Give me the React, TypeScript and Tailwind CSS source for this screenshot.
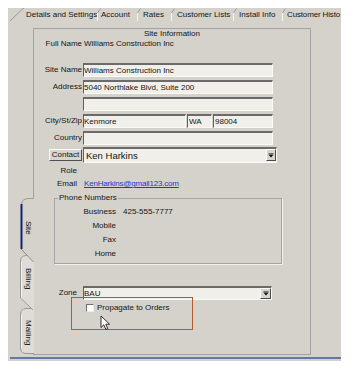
import React from "react";

const sunken =
  "bg-[#f0efe9] border-t-2 border-l border-r border-b border-t-[#6a6a6a] border-l-[#5f5f5f] border-r-[#fbfbf8] border-b-[#fbfbf8]";

function Arrow() {
  return (
    <svg width="6" height="5" viewBox="0 0 6 5">
      <rect x="0.5" y="0.5" width="5" height="1" fill="#111" />
      <path d="M0.8 2 H5.2 L3 4.6 Z" fill="#111" />
    </svg>
  );
}

function DropBtn({ size }: { size: string }) {
  return (
    <div
      className={`${size} shrink-0 bg-[#d8d5ce] border border-t-[#fbfbfb] border-l-[#fbfbfb] border-r-[#4a4a4a] border-b-[#4a4a4a] flex items-center justify-center`}
    >
      <Arrow />
    </div>
  );
}

function TabSep() {
  return (
    <div className="w-[4px] h-[13px] shrink-0">
      <svg width="4" height="13" viewBox="0 0 4 13">
        <path d="M0.5 13 V4.5" stroke="#f6f6f3" strokeWidth="1" fill="none" />
        <path d="M0.5 5 L3.5 0.5" stroke="#9c9c9c" strokeWidth="1" fill="none" />
      </svg>
    </div>
  );
}

function TabStrip() {
  return (
    <div className="h-[13px] flex shrink-0 whitespace-nowrap leading-[13px] text-[#141414]">
      <div className="w-[16px] h-[13px] shrink-0">
        <svg width="16" height="13" viewBox="0 0 16 13">
          <path d="M2 13 L15 0.5 H16" stroke="#9a9a9a" strokeWidth="1" fill="none" />
        </svg>
      </div>
      <div className="w-[73px] shrink-0 pl-[2px]">Details and Settings</div>
      <TabSep />
      <div className="w-[36px] shrink-0">Account</div>
      <TabSep />
      <div className="w-[30px] shrink-0 pl-[2px]">Rates</div>
      <TabSep />
      <div className="w-[58px] shrink-0 pl-[2px]">Customer Lists</div>
      <TabSep />
      <div className="w-[45px] shrink-0 pl-[2px]">Install Info</div>
      <TabSep />
      <div className="shrink-0 pl-[1px] tracking-[-0.15px]">Customer Histo</div>
    </div>
  );
}

function VerticalTabs() {
  return (
    <div className="w-[13px] shrink-0 flex flex-col pt-[170px] text-[#141414]">
      {/* Site (active) */}
      <div className="relative z-20 w-[14px] h-[64px] shrink-0 flex justify-center pl-[2px] pt-[23px]">
        <svg className="absolute inset-0" width="14" height="64" viewBox="0 0 14 64">
          <path d="M14 0 H8 Q1 0.5 1 7 V51 L13.5 64 H14 Z" fill="#d5d2cb" />
          <path d="M14 0.5 H8 Q1.5 1 1.5 7" stroke="#9d9d9d" strokeWidth="1" fill="none" />
          <path d="M1.5 6 V51" stroke="#13236e" strokeWidth="2" fill="none" />
          <path d="M1 51 L13.5 64" stroke="#8c8c8c" strokeWidth="1" fill="none" />
        </svg>
        <span className="relative [writing-mode:vertical-rl] leading-[9px]">Site</span>
      </div>
      {/* Billing */}
      <div className="relative z-10 -mt-[7px] w-[14px] h-[55px] shrink-0 flex justify-center pl-[2px] pt-[13px]">
        <svg className="absolute inset-0" width="14" height="55" viewBox="0 0 14 55">
          <path d="M14 0 H6 Q0.5 0.5 0.5 6 V43 L13 55 H14 Z" fill="#dedcd6" />
          <path d="M14 0.5 H6 Q0.5 1 0.5 6 V43 L13 55" stroke="#9a9a9a" strokeWidth="1" fill="none" />
          <path d="M1.5 7 V42" stroke="#f4f3ef" strokeWidth="1" fill="none" />
        </svg>
        <span className="relative [writing-mode:vertical-rl] leading-[9px]">Billing</span>
      </div>
      {/* Mailing */}
      <div className="relative -mt-[2px] w-[14px] h-[46px] shrink-0 flex justify-center pl-[2px] pt-[12px]">
        <svg className="absolute inset-0" width="14" height="46" viewBox="0 0 14 46">
          <path d="M14 0 H6 Q0.5 0.5 0.5 6 V40 Q0.5 45.5 6 45.5 H14 Z" fill="#dedcd6" />
          <path d="M14 0.5 H6 Q0.5 1 0.5 6 V40 Q0.5 45.5 6 45.5 H14" stroke="#9a9a9a" strokeWidth="1" fill="none" />
          <path d="M1.5 7 V40" stroke="#f4f3ef" strokeWidth="1" fill="none" />
        </svg>
        <span className="relative [writing-mode:vertical-rl] leading-[9px]">Mailing</span>
      </div>
    </div>
  );
}

function InputRow({ label, children, last }: { label: string; children: React.ReactNode; last?: boolean }) {
  return (
    <div className={`flex items-center h-[14px] shrink-0 ${last ? "mb-[2px]" : "mb-[3px]"}`}>
      <div className="w-[48px] text-right leading-[10px]">{label}</div>
      {children}
    </div>
  );
}

function Cursor() {
  return (
    <svg width="11" height="16" viewBox="0 0 11 16">
      <path
        d="M1 1 L1 12.5 L3.8 9.8 L5.9 14.4 L7.8 13.6 L5.8 9.2 L9.6 9.2 Z"
        fill="#ffffff"
        stroke="#1a1a1a"
        strokeWidth="0.9"
        strokeLinejoin="round"
      />
    </svg>
  );
}

function Page() {
  return (
    <div className="w-[278px] h-[327px] shrink-0 border border-[#a2a2a2] flex flex-col">
      <div className="h-[10px] leading-[10px] text-center shrink-0">Site Information</div>
      <div className="h-[10px] leading-[10px] flex shrink-0">
        <div className="w-[48px] text-right">Full Name</div>
        <div className="ml-[2px]">Williams Construction Inc</div>
      </div>

      <div className="mt-[14px]" />
      <InputRow label="Site Name">
        <div className={`ml-[1px] w-[190px] h-[14px] ${sunken} leading-[11px]`}>Williams Construction Inc</div>
      </InputRow>
      <InputRow label="Address">
        <div className={`ml-[1px] w-[190px] h-[14px] ${sunken} leading-[11px]`}>5040 Northlake Blvd, Suite 200</div>
      </InputRow>
      <InputRow label="">
        <div className={`ml-[1px] w-[190px] h-[14px] ${sunken}`} />
      </InputRow>
      <InputRow label="City/St/Zip">
        <div className={`ml-[1px] w-[103px] h-[14px] ${sunken} leading-[11px]`}>Kenmore</div>
        <div className={`ml-[1px] w-[25px] h-[14px] ${sunken} leading-[11px] pl-[1px]`}>WA</div>
        <div className={`ml-[1px] w-[60px] h-[14px] ${sunken} leading-[11px] pl-[1px]`}>98004</div>
      </InputRow>
      <InputRow label="Country" last>
        <div className={`ml-[1px] w-[190px] h-[14px] ${sunken}`} />
      </InputRow>

      <div className="flex items-center h-[16px] shrink-0">
        <div className="w-[48px] flex justify-end">
          <div className="w-[33px] h-[12px] bg-[#d8d5ce] border border-t-[#fbfbfb] border-l-[#fbfbfb] border-r-[#505050] border-b-[#505050] flex items-center justify-center leading-[10px]">
            Contact
          </div>
        </div>
        <div className={`ml-[1px] w-[194px] h-[16px] ${sunken} flex items-start`}>
          <div className="flex-1 pl-[2px] text-[9.5px] leading-[13px]">Ken Harkins</div>
          <DropBtn size="w-[10px] h-[12px]" />
        </div>
      </div>

      <div className="mt-[3px] h-[10px] leading-[10px] flex shrink-0">
        <div className="w-[43px] text-right">Role</div>
      </div>
      <div className="mt-[3px] h-[10px] leading-[10px] flex shrink-0">
        <div className="w-[43px] text-right">Email</div>
        <div className="ml-[7px] text-[#2236d4] underline tracking-[-0.2px]">KenHarkins@gmail123.com</div>
      </div>

      <fieldset className="mt-[4px] ml-[20px] w-[228px] h-[71px] shrink-0 border border-[#a5a5a5] shadow-[1px_1px_0_#f2f1ed]">
        <legend className="ml-[3px] px-[1px] leading-[10px]">Phone Numbers</legend>
        <div className="mt-[2px] flex flex-col">
          <div className="h-[14px] flex items-center">
            <div className="w-[61px] text-right">Business</div>
            <div className="ml-[7px]">425-555-7777</div>
          </div>
          <div className="h-[14px] flex items-center">
            <div className="w-[61px] text-right">Mobile</div>
          </div>
          <div className="h-[14px] flex items-center">
            <div className="w-[61px] text-right">Fax</div>
          </div>
          <div className="h-[14px] flex items-center">
            <div className="w-[61px] text-right">Home</div>
          </div>
        </div>
      </fieldset>

      <div className="mt-[22px] flex items-center h-[14px] shrink-0">
        <div className="w-[43px] text-right leading-[10px]">Zone</div>
        <div className={`ml-[6px] w-[189px] h-[14px] ${sunken} flex items-start`}>
          <div className="flex-1 leading-[11px]">BAU</div>
          <DropBtn size="w-[11px] h-[11px]" />
        </div>
      </div>

      <div className="relative -mt-[3px] ml-[37px] w-[122px] h-[33px] shrink-0 border border-[#b15a2d]">
        <div className="flex items-center pt-[5px] pl-[14px]">
          <div className="w-[8px] h-[8px] bg-white border border-t-[#707070] border-l-[#707070] border-r-[#ececec] border-b-[#ececec]" />
          <div className="ml-[3px] leading-[9px]">Propagate to Orders</div>
        </div>
        <div className="absolute left-[28px] top-[17px]">
          <Cursor />
        </div>
      </div>
    </div>
  );
}

export default function App() {
  return (
    <div className="w-[359px] h-[369px] bg-white pt-[8px] pl-[8px] font-['Liberation_Sans',Arial,sans-serif] text-[8px] text-[#141414]">
      <div className="w-[333px] h-[353px] bg-[#d5d2cb] flex flex-col overflow-hidden">
        <TabStrip />
        <div className="flex-1 flex flex-col">
          <div className="flex pl-[12px] pt-[7px]">
            <VerticalTabs />
            <Page />
          </div>
          <div className="mt-[2px] ml-[2px] h-[2px] bg-[#66789f]" />
        </div>
      </div>
    </div>
  );
}
